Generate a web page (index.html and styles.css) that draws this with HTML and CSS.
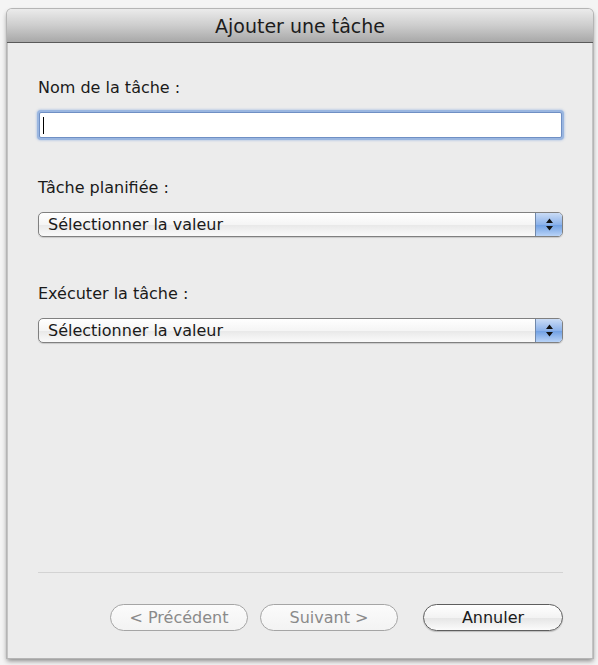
FILE: index.html
```html
<!DOCTYPE html>
<html lang="fr">
<head>
<meta charset="utf-8">
<link rel="stylesheet" href="styles.css">
</head>
<body>
<div class="window">
  <div class="titlebar">Ajouter une tâche</div>
  <div class="content">
    <div class="field field-name">
      <label class="label">Nom de la tâche :</label>
      <div class="textbox"><span class="caret"></span></div>
    </div>
    <div class="field field-plan">
      <label class="label">Tâche planifiée :</label>
      <div class="select"><span class="select-text">Sélectionner la valeur</span><span class="stepper"><svg width="9" height="15" viewBox="0 0 9 15"><path d="M4.5 1.5 L8 6 H1 Z M4.5 13.5 L8 9 H1 Z" fill="#111"/></svg></span></div>
    </div>
    <div class="field field-exec">
      <label class="label">Exécuter la tâche :</label>
      <div class="select"><span class="select-text">Sélectionner la valeur</span><span class="stepper"><svg width="9" height="15" viewBox="0 0 9 15"><path d="M4.5 1.5 L8 6 H1 Z M4.5 13.5 L8 9 H1 Z" fill="#111"/></svg></span></div>
    </div>
    <div class="spacer"></div>
    <div class="separator"></div>
    <div class="buttons">
      <button class="btn disabled">&lt; Précédent</button>
      <button class="btn disabled">Suivant &gt;</button>
      <button class="btn primary">Annuler</button>
    </div>
  </div>
</div>
</body>
</html>
```
FILE: styles.css
```css
html, body {
  margin: 0;
  padding: 0;
}
body {
  background: #f4f4f4;
  width: 598px;
  height: 665px;
  overflow: hidden;
  font-family: "DejaVu Sans", "Liberation Sans", sans-serif;
  font-size: 16px;
  color: #1a1a1a;
}
.window {
  margin: 9px 0 0 7px;
  width: 586px;
  height: 649px;
  display: flex;
  flex-direction: column;
  background: #ececec;
  border-radius: 5px 5px 0 0;
  box-shadow: 0 0 0 1px #b5b5b5, 0 3px 5px rgba(0,0,0,0.45);
}
.titlebar {
  height: 34px;
  flex: none;
  box-sizing: border-box;
  border-radius: 5px 5px 0 0;
  background: linear-gradient(#ebebeb, #cdcdcd 50%, #a8a8a8);
  border-bottom: 1px solid #5a5a5a;
  text-align: center;
  font-size: 19px;
  line-height: 33px;
  padding-top: 1px;
  color: #1c1c1c;
}
.content {
  flex: 1;
  display: flex;
  flex-direction: column;
  padding: 0 29px 0 30px;
  border-left: 1px solid #c4c4c4;
  border-right: 1px solid #c4c4c4;
}
.field {
  display: flex;
  flex-direction: column;
}
.label {
  font-size: 16px;
  line-height: 19px;
}
.field-name .label { margin-top: 35px; }
.field-plan .label { margin-top: 40px; }
.field-exec .label { margin-top: 47px; }
.textbox {
  margin: 15px 1px 0 1px;
  height: 24px;
  background: #fff;
  border: 1px solid #6f8fc4;
  border-radius: 2px;
  box-shadow: 0 0 0 2px #9ab6e0, 0 0 2px 3px rgba(120,160,220,0.35);
  display: flex;
  align-items: center;
}
.caret {
  width: 1px;
  height: 17px;
  background: #000;
  margin-left: 3px;
}
.select {
  margin-top: 15px;
  height: 25px;
  box-sizing: border-box;
  border: 1px solid #808080;
  border-radius: 5px;
  background: linear-gradient(#ffffff, #f5f5f5 50%, #e8e8e8 51%, #fafafa);
  display: flex;
  align-items: center;
  box-shadow: 0 1px 1px rgba(0,0,0,0.15);
  overflow: hidden;
}
.select-text {
  flex: 1;
  padding-left: 9px;
  font-size: 16px;
}
.stepper {
  width: 26px;
  height: 100%;
  display: flex;
  align-items: center;
  justify-content: center;
  background: linear-gradient(#cadcf6, #8cb2ea 50%, #6e9ee2 51%, #b8d3f7);
  border-left: 1px solid #7088aa;
}
.spacer { flex: 1; }
.separator {
  height: 1px;
  background: #d3d3d3;
}
.buttons {
  display: flex;
  justify-content: flex-end;
  gap: 12px;
  margin-top: 31px;
  margin-bottom: 27px;
}
.btn {
  font-family: inherit;
  font-size: 16px;
  height: 27px;
  width: 138px;
  border-radius: 14px;
  border: 1px solid #5e5e5e;
  background: linear-gradient(#ffffff, #f3f3f3 50%, #e5e5e5 51%, #fbfbfb);
  color: #1a1a1a;
  padding: 0;
  box-shadow: 0 1px 1px rgba(0,0,0,0.2);
}
.btn.disabled {
  color: #8a8a8a;
  border-color: #a5a5a5;
  background: linear-gradient(#fbfbfb, #f3f3f3);
  box-shadow: none;
}
.btn.primary {
  width: 140px;
  margin-left: 13px;
}
```
